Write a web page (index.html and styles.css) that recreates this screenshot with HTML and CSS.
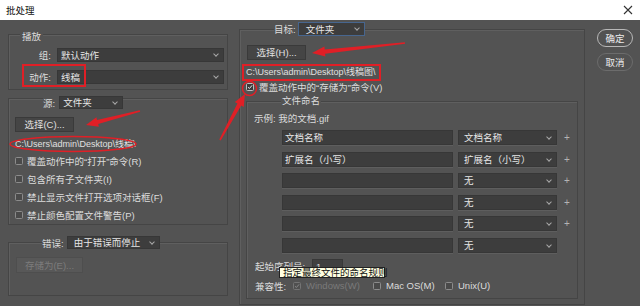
FILE: index.html
```html
<!DOCTYPE html>
<html lang="zh-CN">
<head>
    <meta charset="UTF-8">
    <meta name="viewport" content="width=device-width, initial-scale=1.0">
    <title>批处理</title>
    <link rel="stylesheet" href="styles.css">
</head>
<body>
    <div class="titlebar">
        <span class="title">批处理</span>
        <svg class="close" width="10" height="10" viewBox="0 0 10 10">
            <path d="M1 1 L9 9 M9 1 L1 9" stroke="#333" stroke-width="1.1" fill="none"/>
        </svg>
    </div>

    <div class="dialog">
        <div class="col-left">
            <div class="group play">
                <div class="legend">播放</div>
                <div class="field-row first">
                    <span class="lbl">组:</span>
                    <div class="select grow">默认动作</div>
                </div>
                <div class="field-row second">
                    <span class="lbl">动作:</span>
                    <div class="select grow">线稿</div>
                </div>
            </div>

            <div class="group source">
                <div class="legend">
                    <span class="legend-lbl">源:</span>
                    <div class="select src-select">文件夹</div>
                </div>
                <button class="btn choose">选择(C)...</button>
                <div class="path">C:\Users\admin\Desktop\线稿\</div>
                <div class="checks">
                    <label class="check"><span class="box"></span>覆盖动作中的“打开”命令(R)</label>
                    <label class="check"><span class="box"></span>包含所有子文件夹(I)</label>
                    <label class="check"><span class="box"></span>禁止显示文件打开选项对话框(F)</label>
                    <label class="check"><span class="box"></span>禁止颜色配置文件警告(P)</label>
                </div>
            </div>

            <div class="group errors">
                <div class="legend">
                    <span class="legend-lbl">错误:</span>
                    <div class="select err-select">由于错误而停止</div>
                </div>
                <button class="btn save-as" disabled>存储为(E)...</button>
            </div>
        </div>

        <div class="col-right">
            <div class="group target">
                <div class="legend">
                    <span class="legend-lbl">目标:</span>
                    <div class="select dst-select focus">文件夹</div>
                </div>
                <button class="btn choose-h">选择(H)...</button>
                <div class="path dst-path">C:\Users\admin\Desktop\线稿图\</div>
                <label class="check override"><span class="box checked">
                    <svg width="8" height="8" viewBox="0 0 8 8"><path d="M1.3 4.2 L3.2 6 L6.8 1.8" stroke="#f0f0f0" stroke-width="1.3" fill="none"/></svg>
                </span>覆盖动作中的“存储为”命令(V)</label>

                <div class="group naming">
                    <div class="legend naming-legend">文件命名</div>
                    <div class="example">示例: 我的文档.gif</div>
                    <div class="name-rows">
                        <div class="name-row"><div class="name-input">文档名称</div><div class="select name-select">文档名称</div><span class="plus">+</span></div>
                        <div class="name-row"><div class="name-input">扩展名（小写）</div><div class="select name-select">扩展名（小写）</div><span class="plus">+</span></div>
                        <div class="name-row"><div class="name-input"></div><div class="select name-select">无</div><span class="plus">+</span></div>
                        <div class="name-row"><div class="name-input"></div><div class="select name-select">无</div><span class="plus">+</span></div>
                        <div class="name-row"><div class="name-input"></div><div class="select name-select">无</div><span class="plus">+</span></div>
                        <div class="name-row"><div class="name-input"></div><div class="select name-select">无</div></div>
                    </div>
                    <div class="serial-row">
                        <span class="serial-lbl">起始序列号:</span>
                        <div class="serial-input">1</div>
                        <div class="tooltip">指定最终文件的命名规则</div>
                    </div>
                    <div class="compat-row">
                        <span class="compat-lbl">兼容性:</span>
                        <label class="check inline win disabled"><span class="box checked">
                            <svg width="8" height="8" viewBox="0 0 8 8"><path d="M1.3 4.2 L3.2 6 L6.8 1.8" stroke="#8a8a8a" stroke-width="1.3" fill="none"/></svg>
                        </span>Windows(W)</label>
                        <label class="check inline mac"><span class="box"></span>Mac OS(M)</label>
                        <label class="check inline"><span class="box"></span>Unix(U)</label>
                    </div>
                </div>
            </div>
        </div>

        <div class="col-buttons">
            <button class="pill primary">确定</button>
            <button class="pill">取消</button>
        </div>
    </div>

    <svg class="marks" width="640" height="306" viewBox="0 0 640 306">
        <g fill="none" stroke="#e01f26">
            <rect x="23" y="65" width="62" height="21" stroke-width="2"/>
            <ellipse cx="73" cy="144" rx="63" ry="7.5" stroke-width="1.5"/>
            <rect x="243" y="65" width="137" height="15" stroke-width="2"/>
            <circle cx="249.5" cy="88.5" r="7" stroke-width="1.5"/>
        </g>
        <g fill="#e01f26">
            <polygon points="139.8,110.2 97.0,119.9 96.4,117.2 86,125 98.9,126.8 98.2,124.1 140.2,111.8"/>
            <polygon points="404.9,42.2 324.7,49.4 324.4,46.6 312,53 325.4,56.6 325.1,53.8 405.1,43.8"/>
            <polygon points="220.7,140.4 241.2,105.5 243.7,106.9 245,94 234.9,102.1 237.4,103.5 219.3,139.6"/>
        </g>
    </svg>
</body>
</html>
```

FILE: styles.css
```css
* {
    box-sizing: border-box;
}

body {
    margin: 0;
    width: 640px;
    height: 306px;
    overflow: hidden;
    position: relative;
    font-family: "Liberation Sans", "Noto Sans CJK SC", sans-serif;
    font-size: 9.5px;
    color: #dcdcdc;
    background-color: #535353;
}

.titlebar {
    height: 20px;
    background-color: #fff;
    display: flex;
    align-items: center;
    justify-content: space-between;
    padding: 0 7px 0 6px;
    color: #111;
}

.close {
    display: block;
}

.dialog {
    display: flex;
    align-items: flex-start;
    padding-left: 8px;
    height: 286px;
}

/* group boxes */
.group {
    border: 1px solid #454545;
    box-shadow: inset 1px 1px 0 #5f5f5f;
}

.legend {
    display: flex;
    align-items: center;
    width: max-content;
    background-color: #535353;
}

.select {
    position: relative;
    height: 14px;
    line-height: 14px;
    padding-left: 3px;
    background-color: #3d3d3d;
    border: 1px solid #373737;
    color: #e6e6e6;
    white-space: nowrap;
}

.select::after {
    content: "";
    position: absolute;
    right: 5px;
    top: 3px;
    width: 3px;
    height: 3px;
    border-right: 1px solid #a8a8a8;
    border-bottom: 1px solid #a8a8a8;
    transform: rotate(45deg);
}

.select.focus {
    border-color: #47668f;
}

.btn {
    display: block;
    font: inherit;
    color: #e0e0e0;
    background-color: #454545;
    border: 1px solid #3a3a3a;
    padding: 0;
    line-height: 13px;
}

.btn:disabled {
    background-color: #585858;
    border-color: #4e4e4e;
    color: #7c7c7c;
}

.path {
    height: 12px;
    line-height: 12px;
    font-size: 9px;
    color: #e0e0e0;
    white-space: nowrap;
}

.check {
    display: flex;
    align-items: center;
    gap: 4px;
    white-space: nowrap;
}

.box {
    width: 8px;
    height: 8px;
    border: 1px solid #8c8c8c;
    border-radius: 1.5px;
    background-color: #4a4a4a;
    display: flex;
    align-items: center;
    justify-content: center;
    flex-shrink: 0;
}

.box svg {
    display: block;
}

.box.checked {
    background-color: #3a3a3a;
    border-color: #bdbdbd;
}

/* left column */
.col-left {
    width: 220px;
    margin-top: 14px;
}

.play {
    padding: 0 3px 5px 0;
}

.play .legend {
    margin: -3px 0 0 11px;
    padding: 0 2px;
    height: 10px;
    line-height: 10px;
}

.field-row {
    display: flex;
    align-items: center;
    height: 14px;
}

.field-row.first {
    margin-top: 6px;
}

.field-row.second {
    margin-top: 8px;
}

.lbl {
    width: 42px;
    margin-right: 6px;
    text-align: right;
}

.grow {
    flex: 1;
}

.source {
    margin-top: 8px;
}

.source .legend {
    margin: -3px 0 0 34px;
    height: 13px;
}

.legend-lbl {
    padding-right: 4px;
}

.src-select {
    width: 64px;
    height: 13px;
    line-height: 12px;
}

.choose {
    width: 59px;
    height: 15px;
    margin: 8px 0 0 6px;
}

.source .path {
    margin: 6px 0 0 6px;
}

.checks {
    margin: 2px 0 0 6px;
}

.checks .check {
    height: 18px;
}

.errors {
    margin-top: 17px;
    padding-bottom: 22px;
}

.errors .legend {
    margin: -7px 0 0 33px;
    height: 13px;
}

.errors .legend-lbl {
    padding-right: 3px;
}

.err-select {
    width: 93px;
    height: 13px;
    line-height: 12px;
    padding-left: 6px;
}

.save-as {
    width: 67px;
    height: 16px;
    margin: 8px 0 0 7px;
}

/* right column */
.col-right {
    width: 346px;
    margin: 9px 0 0 11px;
}

.target {
    padding-bottom: 5px;
}

.target .legend {
    margin: -8px 0 0 34px;
    height: 14px;
}

.target .legend-lbl {
    padding-right: 2px;
}

.dst-select {
    width: 67px;
    padding-left: 7px;
}

.choose-h {
    width: 59px;
    height: 15px;
    margin: 9px 0 0 7px;
}

.dst-path {
    margin: 6px 0 0 6px;
}

.override {
    height: 14px;
    margin: 2px 0 0 6px;
    gap: 5px;
}

.naming {
    width: 332px;
    margin: 7px 0 0 6px;
    padding-bottom: 6px;
}

.naming-legend {
    margin: -7px 0 0 15px;
    height: 10px;
    line-height: 10px;
    padding: 0 1px;
}

.example {
    margin: 5px 0 0 7px;
    height: 12px;
    line-height: 12px;
}

.name-rows {
    margin: 5px 0 0 35px;
    display: flex;
    flex-direction: column;
    gap: 6.6px;
}

.name-row {
    display: flex;
    align-items: center;
    height: 15px;
}

.name-input {
    width: 171px;
    height: 15px;
    line-height: 14px;
    padding-left: 2px;
    background-color: #3d3d3d;
    border: 1px solid #373737;
    box-shadow: 0 1px 0 #5e5e5e;
    color: #e6e6e6;
}

.name-select {
    width: 99px;
    height: 15px;
    margin-left: 5px;
    box-shadow: 0 1px 0 #5e5e5e;
    padding-left: 5px;
}

.name-select::after {
    top: 4px;
}

.plus {
    margin-left: 7px;
    color: #b4b4b4;
    font-size: 10px;
}

.serial-row {
    position: relative;
    display: flex;
    align-items: center;
    height: 14px;
    margin: 6px 0 0 8px;
}

.serial-lbl {
    width: 57px;
}

.serial-input {
    width: 31px;
    height: 14px;
    line-height: 13px;
    padding-left: 3px;
    background-color: #404040;
    border: 1px solid #383838;
}

.tooltip {
    position: absolute;
    left: 24px;
    top: 8px;
    width: 106px;
    height: 11px;
    line-height: 9px;
    padding-left: 3px;
    background-color: #ffffe1;
    border: 1px solid #222;
    color: #111;
    white-space: nowrap;
}

.compat-row {
    display: flex;
    align-items: center;
    height: 12px;
    margin: 7px 0 0 8px;
}

.compat-lbl {
    width: 38px;
}

.inline {
    gap: 5px;
}

.win {
    width: 80px;
}

.mac {
    width: 72px;
}

.disabled {
    color: #7a7a7a;
}

.disabled .box {
    border-color: #747474;
    background-color: #505050;
}

/* OK / Cancel */
.col-buttons {
    width: 36px;
    margin: 9px 0 0 12px;
    display: flex;
    flex-direction: column;
    gap: 6px;
}

.pill {
    height: 18px;
    padding: 0;
    font: inherit;
    color: #ececec;
    background-color: #525252;
    border: 1.5px solid #6c6c6c;
    border-radius: 9px;
}

.pill.primary {
    border-color: #b8b8b8;
}

.marks {
    position: absolute;
    left: 0;
    top: 0;
    pointer-events: none;
}
```
